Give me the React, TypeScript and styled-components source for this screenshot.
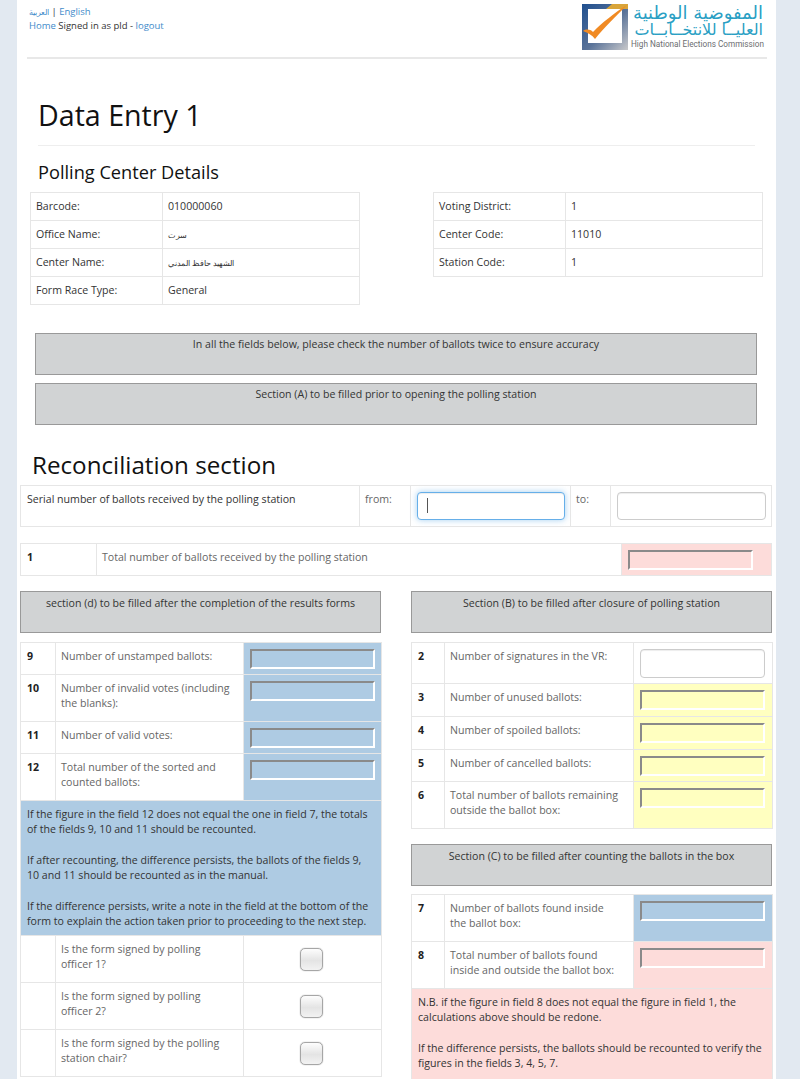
import type {ReactNode} from "react";
import styled, {createGlobalStyle} from "styled-components";

const GlobalStyle = createGlobalStyle`
  html, body {
    margin: 0;
    height: 1079px;
    overflow: hidden;
    background: #e2e9f1;
  }
  body {
    font-family: "Open Sans", sans-serif;
    font-size: 10.6px;
    line-height: 15px;
    color: #333;
  }
`;

const Page = styled.div`
  width: 752px;
  margin-left: 17px;
  padding: 0 4px 0 3px;
  background: #fff;
  height: 1079px;
  overflow: hidden;
`;

const Header = styled.header`
  display: flex;
  justify-content: space-between;
  margin: 0 5px 0 7px;
  height: 57px;
  border-bottom: 2px solid #e8e8e8;
`;

const HeaderLinks = styled.div`
  padding: 5px 0 0 2px;
  line-height: 13px;
  font-size: 9.5px;
`;

const Link = styled.a`
  color: #428bca;
  text-decoration: none;
`;

const Arabic = styled.span`
  font-size: 7.8px;
`;

const Logo = styled.div`
  display: flex;
  gap: 3px;
  padding: 4px 4px 0 0;
`;

const LogoText = styled.div`
  width: 132px;
  text-align: right;
  font-family: "DejaVu Sans", sans-serif;
  color: #2a9fc4;
`;

const LogoArabic = styled.div<{$size: number}>`
  font-size: ${({$size}) => $size}px;
  line-height: 17px;
  white-space: nowrap;
`;

const LogoEnglish = styled.div`
  font-family: "Roboto", sans-serif;
  font-size: 8.2px;
  line-height: 12px;
  color: #6d6e70;
  white-space: nowrap;
`;

const Title = styled.h1`
  margin: 36px 17px 0 18px;
  padding-bottom: 10px;
  font-size: 28.6px;
  line-height: 40px;
  font-weight: 400;
  color: #111;
  border-bottom: 1px solid #eee;
`;

const SubTitle = styled.h2`
  margin: 14px 0 8px 18px;
  font-size: 18.2px;
  line-height: 24px;
  font-weight: 400;
  color: #111;
`;

const Details = styled.div`
  display: flex;
  justify-content: space-between;
  align-items: flex-start;
  margin: 0 9px 0 10px;
`;

const Table = styled.table<{$width: number}>`
  width: ${({$width}) => $width}px;
  table-layout: fixed;
  border-collapse: collapse;
`;

const Col = styled.col<{$width: number}>`
  width: ${({$width}) => $width}px;
`;

const Cell = styled.td<{$fill?: string}>`
  padding: 6px 6px 10px;
  border: 1px solid #e6e6e6;
  vertical-align: top;
  background: ${({$fill}) => $fill ?? "transparent"};
`;

const DetailCell = styled.td`
  height: 28px;
  box-sizing: border-box;
  padding: 0 5px;
  border: 1px solid #e6e6e6;
  vertical-align: middle;
`;

const InputCell = styled(Cell)<{$tall?: boolean}>`
  padding: 6px 6px ${({$tall}) => ($tall ? 6 : 5)}px;
`;

const Muted = styled(Cell)`
  padding-left: 5px;
  padding-right: 12px;
  color: #666;
`;

const Num = styled(Cell)`
  font-weight: 700;
  color: #222;
`;

const Banner = styled.div<{$gap: number; $pad: number}>`
  height: 42px;
  box-sizing: border-box;
  margin-top: ${({$gap}) => $gap}px;
  padding-top: ${({$pad}) => $pad}px;
  text-align: center;
  background: #d1d3d4;
  border: 1px solid #999;
  color: #333;
`;

const WideBanners = styled.div`
  margin: 28px 15px 0;
`;

const Section = styled.h2`
  margin: 23px 0 4px 12px;
  font-size: 24.2px;
  line-height: 33px;
  font-weight: 400;
  color: #111;
`;

const SpacedTable = styled(Table)`
  margin-top: 16px;
`;

const FieldTable = styled(Table)<{$top: number}>`
  margin-top: ${({$top}) => $top}px;
`;

const FlatInput = styled.input`
  display: block;
  width: 125px;
  height: 20px;
  box-sizing: border-box;
  padding: 0;
  background: transparent;
  border: 2px solid;
  border-color: #8a8a8a #fff #fff #8a8a8a;
  outline: none;
`;

const BoxInput = styled.input<{$width: number; $height: number; $focus?: boolean}>`
  display: block;
  width: ${({$width}) => $width}px;
  height: ${({$height}) => $height}px;
  box-sizing: border-box;
  padding: 0 10px;
  background: #fff;
  border: 1px solid ${({$focus}) => ($focus ? "#66afe9" : "#ccc")};
  border-radius: 4px;
  outline: none;
  box-shadow: ${({$focus}) =>
    $focus ? "inset 0 1px 1px rgba(0,0,0,.075), 0 0 6px rgba(102,175,233,.6)" : "inset 0 1px 1px rgba(0,0,0,.075)"};
`;

const Caret = styled.span`
  position: absolute;
  margin: 6px 0 0 10px;
  width: 1px;
  height: 15px;
  background: #555;
`;

const Columns = styled.div`
  display: grid;
  grid-template-columns: 361px 361px;
  justify-content: space-between;
  margin-top: 15px;
`;

const Column = styled.div`
  display: flex;
  flex-direction: column;
`;

const Note = styled.td<{$fill: string}>`
  padding: 6px;
  border: 1px solid #e6e6e6;
  background: ${({$fill}) => $fill};
  color: #333;
  line-height: 15.3px;
`;

const Paragraph = styled.p`
  margin: 0 0 15.3px;
  &:last-child {
    margin-bottom: 0;
  }
`;

const Check = styled.span`
  display: block;
  width: 23px;
  height: 23px;
  margin: 6px 0 0 50px;
  box-sizing: border-box;
  border: 1px solid #a6a6a6;
  border-radius: 5px;
  background: linear-gradient(#fdfdfd, #e4e4e4 55%, #f2f2f2);
  box-shadow: 0 0 1px #888;
`;

const BLUE = "#aecbe3";
const PINK = "#fddcda";
const YELLOW = "#ffffc0";

const Mark = () => (
  <svg width="46" height="46" viewBox="0 0 46 46">
    <defs>
      <linearGradient id="frame" x1="0" y1="0" x2="1" y2="1">
        <stop offset="0" stopColor="#1f4f8f" />
        <stop offset="0.55" stopColor="#5a7399" />
        <stop offset="1" stopColor="#c9c9cb" />
      </linearGradient>
    </defs>
    <rect width="46" height="46" fill="url(#frame)" />
    <path d="M30 0 L46 0 L46 5 L24 5 Z" fill="#d9a53a" />
    <rect x="6" y="5" width="34" height="34" fill="#fff" />
    <path d="M1 27 C4 25 8 25 11 28 C20 19 32 9 45 1 C34 12 22 24 13 35 C10 31 6 29 1 27 Z" fill="#f08a24" />
  </svg>
);

const detailsLeft: [string, ReactNode][] = [
  ["Barcode:", "010000060"],
  ["Office Name:", <Arabic key="office">سرت</Arabic>],
  ["Center Name:", <Arabic key="center">الشهيد حافظ المدني</Arabic>],
  ["Form Race Type:", "General"],
];

const detailsRight: [string, ReactNode][] = [
  ["Voting District:", "1"],
  ["Center Code:", "11010"],
  ["Station Code:", "1"],
];

const DetailTable = ({rows}: {rows: [string, ReactNode][]}) => (
  <Table $width={329}>
    <colgroup>
      <Col $width={132} />
      <Col $width={197} />
    </colgroup>
    <tbody>
      {rows.map(([label, value]) => (
        <tr key={label}>
          <DetailCell>{label}</DetailCell>
          <DetailCell>{value}</DetailCell>
        </tr>
      ))}
    </tbody>
  </Table>
);

const FieldRow = ({num, label, fill, tall}: {num: string; label: string; fill: string; tall?: boolean}) => (
  <tr>
    <Num>{num}</Num>
    <Muted>{label}</Muted>
    <InputCell $fill={fill} $tall={tall}>
      <FlatInput />
    </InputCell>
  </tr>
);

const CheckRow = ({label}: {label: string}) => (
  <tr>
    <Cell />
    <Muted>{label}</Muted>
    <Cell>
      <Check />
    </Cell>
  </tr>
);

const ColsLeft = () => (
  <colgroup>
    <Col $width={35} />
    <Col $width={188} />
    <Col $width={138} />
  </colgroup>
);

const ColsRight = () => (
  <colgroup>
    <Col $width={33} />
    <Col $width={189} />
    <Col $width={139} />
  </colgroup>
);

const App = () => (
  <>
    <GlobalStyle />
    <Page>
      <Header>
        <HeaderLinks>
          <div>
            <Link href="#">
              <Arabic>العربية</Arabic>
            </Link>{" "}
            | <Link href="#">English</Link>
          </div>
          <div>
            <Link href="#">Home</Link> Signed in as pld - <Link href="#">logout</Link>
          </div>
        </HeaderLinks>
        <Logo>
          <Mark />
          <LogoText>
            <LogoArabic $size={18}>المفوضية الوطنية</LogoArabic>
            <LogoArabic $size={16}>العليــا للانتخــابــات</LogoArabic>
            <LogoEnglish>High National Elections Commission</LogoEnglish>
          </LogoText>
        </Logo>
      </Header>

      <Title>Data Entry 1</Title>
      <SubTitle>Polling Center Details</SubTitle>
      <Details>
        <DetailTable rows={detailsLeft} />
        <DetailTable rows={detailsRight} />
      </Details>

      <WideBanners>
        <Banner $gap={0} $pad={3}>
          In all the fields below, please check the number of ballots twice to ensure accuracy
        </Banner>
        <Banner $gap={8} $pad={3}>
          Section (A) to be filled prior to opening the polling station
        </Banner>
      </WideBanners>

      <Section>Reconciliation section</Section>
      <Table $width={751}>
        <colgroup>
          <Col $width={339} />
          <Col $width={51} />
          <Col $width={160} />
          <Col $width={40} />
          <Col $width={161} />
        </colgroup>
        <tbody>
          <tr>
            <Cell>Serial number of ballots received by the polling station</Cell>
            <Muted>from:</Muted>
            <InputCell $tall>
              <Caret />
              <BoxInput $width={148} $height={28} $focus />
            </InputCell>
            <Muted>to:</Muted>
            <InputCell $tall>
              <BoxInput $width={149} $height={28} />
            </InputCell>
          </tr>
        </tbody>
      </Table>
      <SpacedTable $width={751}>
        <colgroup>
          <Col $width={76} />
          <Col $width={525} />
          <Col $width={150} />
        </colgroup>
        <tbody>
          <tr>
            <Num>1</Num>
            <Muted>Total number of ballots received by the polling station</Muted>
            <InputCell $fill={PINK}>
              <FlatInput />
            </InputCell>
          </tr>
        </tbody>
      </SpacedTable>

      <Columns>
        <Column>
          <Banner $gap={0} $pad={4}>
            section (d) to be filled after the completion of the results forms
          </Banner>
          <FieldTable $width={361} $top={9}>
            <ColsLeft />
            <tbody>
              <FieldRow num="9" label="Number of unstamped ballots:" fill={BLUE} />
              <FieldRow num="10" label="Number of invalid votes (including the blanks):" fill={BLUE} />
              <FieldRow num="11" label="Number of valid votes:" fill={BLUE} />
              <FieldRow num="12" label="Total number of the sorted and counted ballots:" fill={BLUE} />
              <tr>
                <Note colSpan={3} $fill={BLUE}>
                  <Paragraph>
                    If the figure in the field 12 does not equal the one in field 7, the totals of the fields 9, 10 and
                    11 should be recounted.
                  </Paragraph>
                  <Paragraph>
                    If after recounting, the difference persists, the ballots of the fields 9, 10 and 11 should be
                    recounted as in the manual.
                  </Paragraph>
                  <Paragraph>
                    If the difference persists, write a note in the field at the bottom of the form to explain the
                    action taken prior to proceeding to the next step.
                  </Paragraph>
                </Note>
              </tr>
              <CheckRow label="Is the form signed by polling officer 1?" />
              <CheckRow label="Is the form signed by polling officer 2?" />
              <CheckRow label="Is the form signed by the polling station chair?" />
            </tbody>
          </FieldTable>
        </Column>

        <Column>
          <Banner $gap={0} $pad={4}>
            Section (B) to be filled after closure of polling station
          </Banner>
          <FieldTable $width={361} $top={9}>
            <ColsRight />
            <tbody>
              <tr>
                <Num>2</Num>
                <Muted>Number of signatures in the VR:</Muted>
                <InputCell>
                  <BoxInput $width={125} $height={29} />
                </InputCell>
              </tr>
              <FieldRow num="3" label="Number of unused ballots:" fill={YELLOW} tall />
              <FieldRow num="4" label="Number of spoiled ballots:" fill={YELLOW} tall />
              <FieldRow num="5" label="Number of cancelled ballots:" fill={YELLOW} />
              <FieldRow num="6" label="Total number of ballots remaining outside the ballot box:" fill={YELLOW} />
            </tbody>
          </FieldTable>
          <Banner $gap={15} $pad={4}>
            Section (C) to be filled after counting the ballots in the box
          </Banner>
          <FieldTable $width={361} $top={8}>
            <ColsRight />
            <tbody>
              <FieldRow num="7" label="Number of ballots found inside the ballot box:" fill={BLUE} />
              <FieldRow num="8" label="Total number of ballots found inside and outside the ballot box:" fill={PINK} />
              <tr>
                <Note colSpan={3} $fill={PINK}>
                  <Paragraph>
                    N.B. if the figure in field 8 does not equal the figure in field 1, the calculations above should
                    be redone.
                  </Paragraph>
                  <Paragraph>
                    If the difference persists, the ballots should be recounted to verify the figures in the fields 3,
                    4, 5, 7.
                  </Paragraph>
                  <Paragraph>&nbsp;</Paragraph>
                </Note>
              </tr>
            </tbody>
          </FieldTable>
        </Column>
      </Columns>
    </Page>
  </>
);

export default App;
